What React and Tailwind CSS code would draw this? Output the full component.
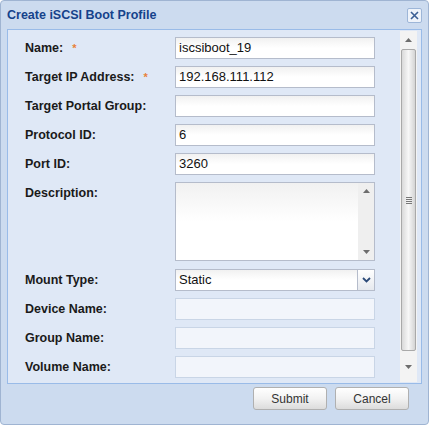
import React from "react";

const font = { fontFamily: '"Liberation Sans", Arial, sans-serif' };

function Field({ value = "", disabled = false }) {
  return (
    <div
      className={`h-[22px] w-[200px] border flex items-center px-[3px] text-[13px] text-[#111] ${
        disabled
          ? "border-[#c9d5e6] bg-[#f2f5fb]"
          : "border-[#b5bccb] bg-gradient-to-b from-[#f1f1f1] via-white to-white"
      }`}
    >
      {value}
    </div>
  );
}

function Row({ label, required, children, top = false }) {
  return (
    <div className={`flex ${top ? "items-start" : "items-center"}`}>
      <div
        className={`w-[167px] shrink-0 pl-[17px] text-[12.5px] font-bold text-[#1a1a1a] flex items-center ${
          top ? "pt-[2px]" : ""
        }`}
      >
        <span>{label}</span>
        {required && <span className="ml-[9px] text-[#e8823a] text-[11px]">*</span>}
      </div>
      {children}
    </div>
  );
}

function Arrow({ up }) {
  return (
    <svg width="7" height="4" viewBox="0 0 7 4">
      <path d={up ? "M0 4 L3.5 0 L7 4 Z" : "M0 0 L3.5 4 L7 0 Z"} fill="#6d6d6d" />
    </svg>
  );
}

export default function App() {
  return (
    <div style={font} className="w-[429px] h-[425px] bg-[#ccdbef] border border-[#9fb4d2] rounded-[4px] flex flex-col overflow-hidden">
      <div className="h-[28px] flex items-center justify-between pl-[6px] pr-[6px]">
        <span className="text-[12.5px] font-bold text-[#15428b]">Create iSCSI Boot Profile</span>
        <div className="w-[15px] h-[15px] border border-[#9db6d8] bg-[#eef3fa] rounded-[2px] flex items-center justify-center">
          <svg width="9" height="9" viewBox="0 0 9 9">
            <path d="M1 1 L8 8 M8 1 L1 8" stroke="#3b5f94" strokeWidth="1.6" />
          </svg>
        </div>
      </div>

      <div className="mx-[6px] h-[355px] border border-[#99bbe8] bg-[#dfe8f6] flex">
        <div className="flex-1 pt-[7px] flex flex-col gap-[7px]">
          <Row label="Name:" required>
            <Field value="iscsiboot_19" />
          </Row>
          <Row label="Target IP Address:" required>
            <Field value="192.168.111.112" />
          </Row>
          <Row label="Target Portal Group:">
            <Field />
          </Row>
          <Row label="Protocol ID:">
            <Field value="6" />
          </Row>
          <Row label="Port ID:">
            <Field value="3260" />
          </Row>
          <Row label="Description:" top>
            <div className="h-[79px] w-[200px] border border-[#b5bccb] bg-gradient-to-b from-[#f1f1f1] via-white to-white flex justify-end">
              <div className="w-[16px] bg-[#efefef] flex flex-col items-center justify-between py-[6px]">
                <Arrow up />
                <Arrow />
              </div>
            </div>
          </Row>
          <div className="mt-[1px]">
            <Row label="Mount Type:">
              <div className="flex">
                <div className="h-[22px] w-[183px] border border-[#b5bccb] bg-gradient-to-b from-[#f1f1f1] via-white to-white flex items-center px-[3px] text-[13px] text-[#111]">
                  Static
                </div>
                <div className="h-[22px] w-[17px] border border-l-0 border-[#b5bccb] bg-gradient-to-b from-white to-[#e6e9ee] flex items-center justify-center">
                  <svg width="9" height="6" viewBox="0 0 9 6">
                    <path d="M1 1 L4.5 4.5 L8 1" stroke="#2c4a78" strokeWidth="1.8" fill="none" />
                  </svg>
                </div>
              </div>
            </Row>
          </div>
          <Row label="Device Name:">
            <Field disabled />
          </Row>
          <Row label="Group Name:">
            <Field disabled />
          </Row>
          <Row label="Volume Name:">
            <Field disabled />
          </Row>
        </div>

        <div className="w-[17px] mr-[4px] my-[1px] bg-[#f3f3f3] flex flex-col items-center">
          <div className="h-[18px] flex items-center justify-center">
            <Arrow up />
          </div>
          <div className="w-[15px] h-[302px] border border-[#a9a9a9] rounded-[2px] bg-gradient-to-r from-[#d9d9d9] via-[#f7f7f7] to-[#d4d4d4] flex items-center justify-center">
            <div className="flex flex-col gap-[1px]">
              <div className="w-[6px] h-[1px] bg-[#777]" />
              <div className="w-[6px] h-[1px] bg-[#777]" />
              <div className="w-[6px] h-[1px] bg-[#777]" />
              <div className="w-[6px] h-[1px] bg-[#777]" />
            </div>
          </div>
          <div className="flex-1 flex items-center justify-center">
            <Arrow />
          </div>
        </div>
      </div>

      <div className="flex justify-end gap-[8px] pr-[19px] pt-[3px]">
        {["Submit", "Cancel"].map((t) => (
          <div
            key={t}
            className="w-[74px] h-[23px] border border-[#b0b0b0] rounded-[3px] bg-gradient-to-b from-white via-[#f2f2f2] to-[#dcdcdc] flex items-center justify-center text-[12px] text-[#333]"
          >
            {t}
          </div>
        ))}
      </div>
    </div>
  );
}
